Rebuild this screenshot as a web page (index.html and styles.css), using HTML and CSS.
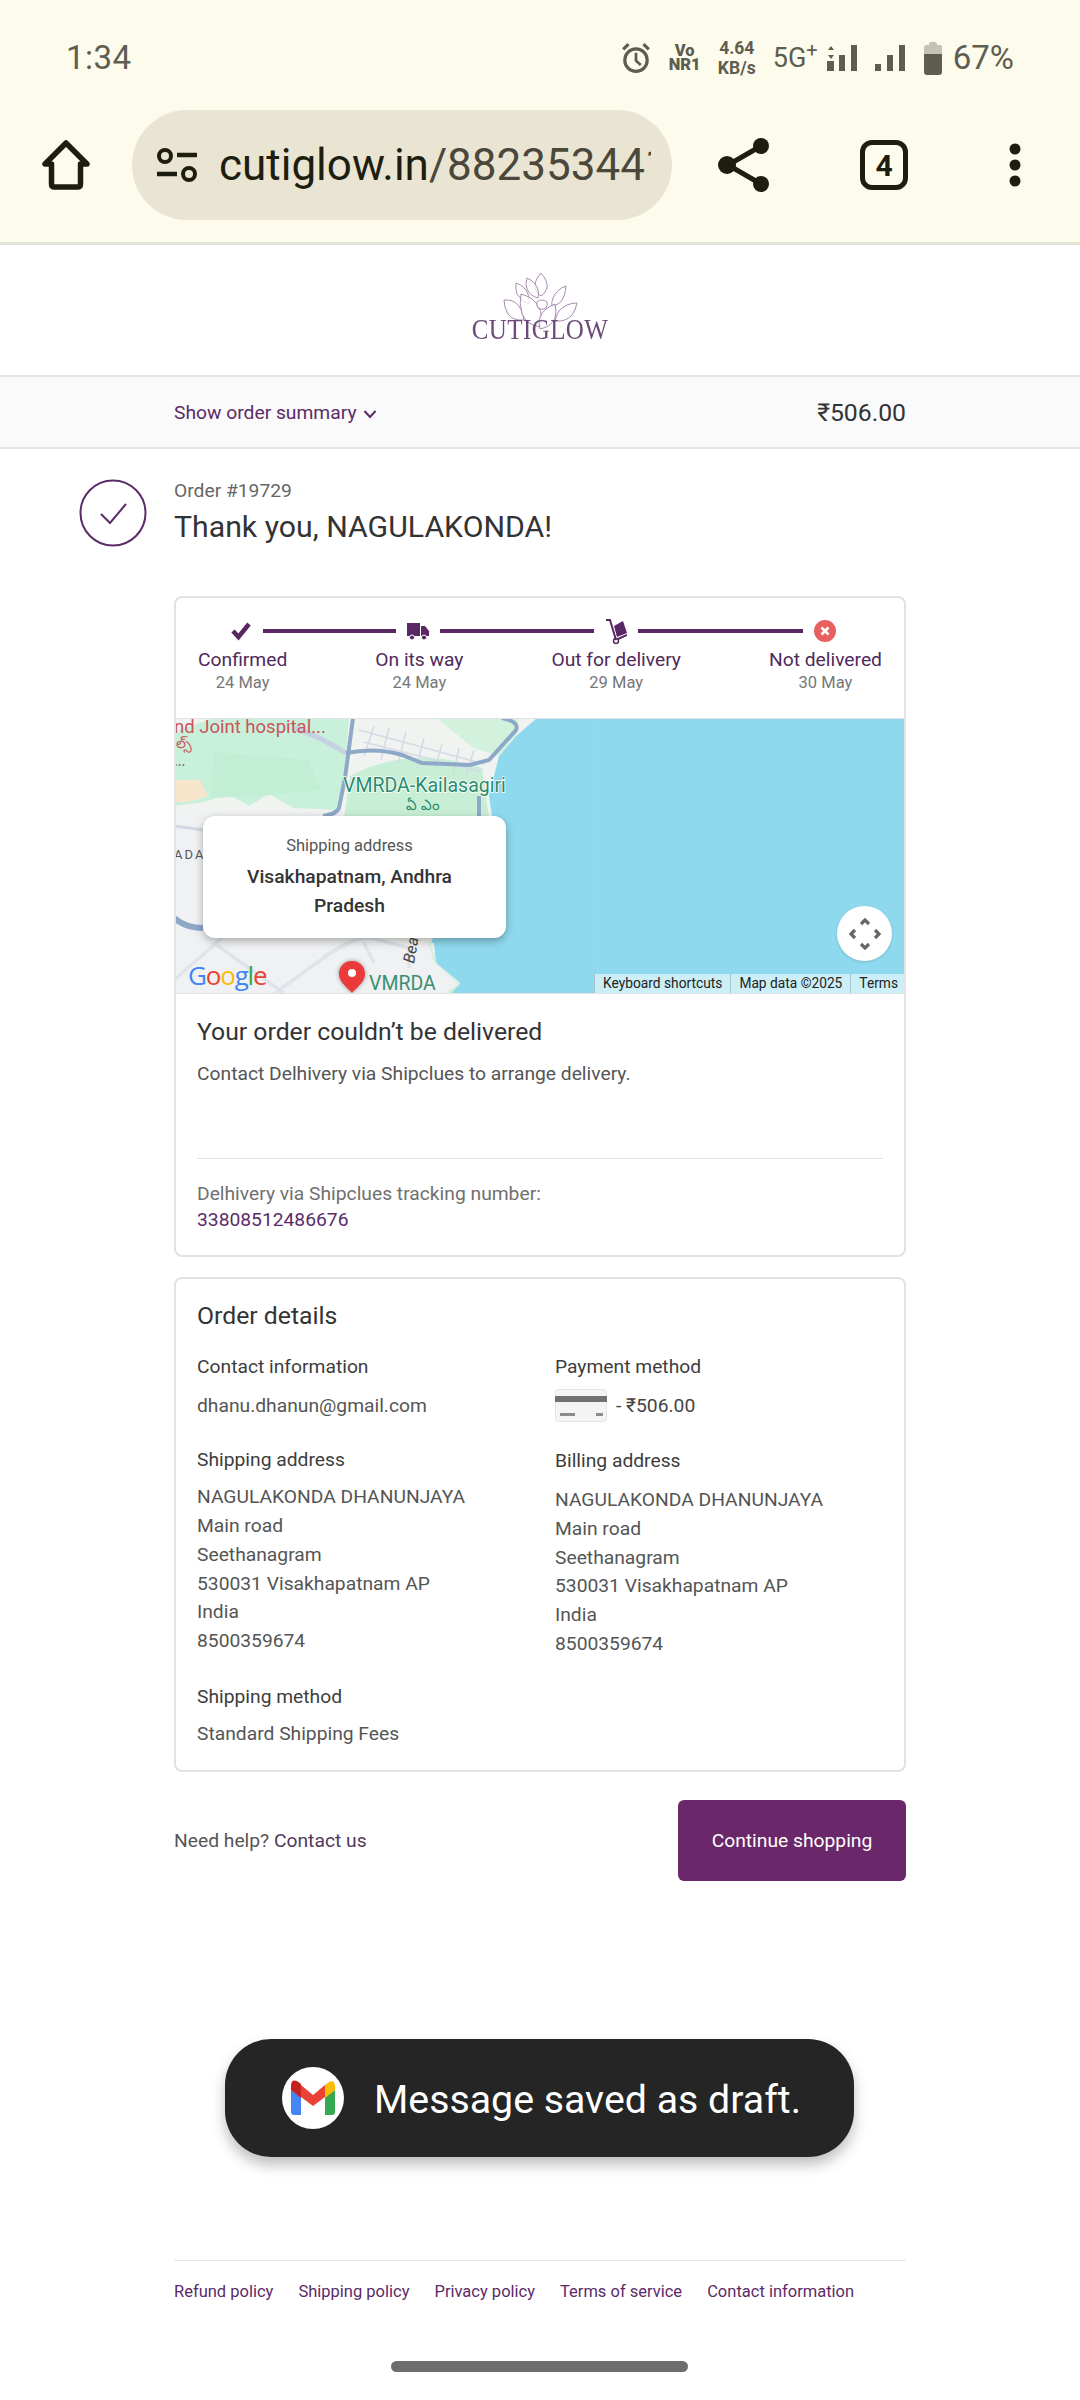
FILE: index.html
```html
<!DOCTYPE html>
<html lang="en">
<head>
<meta charset="utf-8">
<title>Thank you - Cutiglow</title>
<link rel="stylesheet" href="styles.css">
</head>
<body>
<div class="screen">
  <header class="chrome">
    <div class="status">
      <span class="time">1:34</span>
      <div class="status-icons">
        <svg class="alarm" viewBox="0 0 28 30" width="30" height="32"><circle cx="14" cy="17" r="10.500" fill="none" stroke="#5d5d50" stroke-width="3"/><path d="M14 10v7.500l4.500 4" fill="none" stroke="#5d5d50" stroke-width="2.600"/><path d="M2 7l5-5M26 7l-5-5" stroke="#5d5d50" stroke-width="3"/></svg>
        <span class="stack vo"><b>Vo</b><b>NR1</b></span>
        <span class="stack speed"><b>4.64</b><b>KB/s</b></span>
        <span class="net">5G<sup>+</sup></span>
        <svg viewBox="0 0 33 28" width="33" height="28"><path d="M3 6l3-4 3 4zM3 11l3 4 3-4z" fill="#5d5d50"/><rect x="2" y="17" width="7" height="10" fill="#5d5d50"/><rect x="14" y="11" width="6" height="16" fill="#5d5d50"/><rect x="26" y="1" width="6" height="26" fill="#5d5d50"/></svg>
        <svg class="sig2" viewBox="0 0 33 28" width="33" height="28"><rect x="1" y="20" width="6" height="7" fill="#5d5d50"/><rect x="13" y="11" width="6" height="16" fill="#5d5d50"/><rect x="25" y="1" width="6" height="26" fill="#5d5d50"/></svg>
        <svg class="batt" viewBox="0 0 18 34" width="18" height="34"><path d="M5 3q0-2 2-2h4q2 0 2 2v1h3q2 0 2 2v8H0V6q0-2 2-2h3z" fill="#c3c2b4"/><path d="M0 13h18v18q0 3-3 3H3q-3 0-3-3z" fill="#5d5d50"/></svg>
        <span class="pct">67%</span>
      </div>
    </div>
    <div class="toolbar">
      <svg class="home" viewBox="0 0 48 50" width="48" height="50"><path d="M24 3L3 24h6.500v20q0 3 3 3h23q3 0 3-3V24H45z" fill="none" stroke="#1d1d10" stroke-width="5.500" stroke-linejoin="round"/></svg>
      <div class="omnibox">
        <svg class="tune" viewBox="0 0 42 36" width="42" height="36"><circle cx="9" cy="9" r="6" fill="none" stroke="#1d1d10" stroke-width="4"/><path d="M21 8h20M1 27h20" stroke="#1d1d10" stroke-width="4.500"/><circle cx="33" cy="27" r="6" fill="none" stroke="#1d1d10" stroke-width="4"/></svg>
        <div class="url"><span class="host">cutiglow.in</span>/882353441</div>
      </div>
      <svg class="share" viewBox="0 0 52 56" width="52" height="56"><path d="M43 9L10 28l33 19" fill="none" stroke="#1d1d10" stroke-width="5"/><circle cx="43" cy="9" r="8" fill="#1d1d10"/><circle cx="9" cy="28" r="9" fill="#1d1d10"/><circle cx="43" cy="47" r="8" fill="#1d1d10"/></svg>
      <div class="tabs">4</div>
      <svg class="menu" viewBox="0 0 14 44" width="14" height="44"><circle cx="7" cy="6" r="5.500" fill="#1d1d10"/><circle cx="7" cy="22" r="5.500" fill="#1d1d10"/><circle cx="7" cy="38" r="5.500" fill="#1d1d10"/></svg>
    </div>
  </header>

  <div class="brand">
    <div class="logo">
      <svg viewBox="0 0 75 68" width="75" height="68">
        <g fill="rgba(255,255,255,.75)" stroke="#a78bb0" stroke-width="1">
          <path d="M38 1q7 8 6 15-2 6-6 8-4-2-6-8-1-7 6-15z"/>
          <path d="M24 6q9 4 11 12 1 5 0 8-8-2-11-9-2-6 0-11z"/>
          <path d="M13 11q9 3 12 11 2 6 1 10-8-3-12-10-2-6-1-11z"/>
          <path d="M63 14q-9 3-13 12-2 5-1 8 9-1 12-10 2-6 2-10z"/>
          <path d="M1 28q9-1 15 6 4 5 5 14-11 1-16-6-4-7-4-14z"/>
          <path d="M74 31q-11 0-18 8-3 5-4 10 11 1 17-6 4-6 5-12z"/>
          <path d="M18 22q12 3 18 13 4 9 1 20-13-2-18-13-3-11-1-20z"/>
          <path d="M52 32q-11 4-15 13-2 7 0 12 11-2 15-11 2-7 0-14z"/>
          <path d="M34 30q5-4 10 0 1 3-1 6-4 3-8 0-2-3-1-6z"/>
        </g>
      </svg>
      <span class="wordmark">CUTIGLOW</span>
    </div>
  </div>

  <div class="summary">
    <div class="summary-inner">
      <span class="summary-link">Show order summary
        <svg viewBox="0 0 14 10" width="14" height="10"><path d="M1.500 2L7 8l5.500-6" fill="none" stroke="#5b2b68" stroke-width="2"/></svg>
      </span>
      <span class="summary-total">₹506.00</span>
    </div>
  </div>

  <main class="main">
    <section class="order-head">
      <svg class="check-circle" viewBox="0 0 68 68" width="68" height="68"><circle cx="34" cy="34" r="32.500" fill="none" stroke="#5b2b68" stroke-width="2"/><path d="M22 35l9 9 16-19" fill="none" stroke="#5b2b68" stroke-width="2"/></svg>
      <div class="order-text">
        <p class="order-no">Order #19729</p>
        <h1 class="thanks">Thank you, NAGULAKONDA!</h1>
      </div>
    </section>

    <section class="card tracking">
      <div class="progress">
        <div class="icons">
          <svg viewBox="0 0 22 22" width="22" height="22"><path d="M3 11l5.500 6L19 4" fill="none" stroke="#592763" stroke-width="4.500"/></svg>
          <span class="line l1"></span>
          <svg viewBox="0 0 22 22" width="22" height="22"><path d="M0 3h13v13H0z" fill="#592763"/><path d="M14 6h4l4 5v5h-8z" fill="#592763"/><circle cx="5" cy="17.500" r="2.500" fill="#592763" stroke="#fff"/><circle cx="17" cy="17.500" r="2.500" fill="#592763" stroke="#fff"/></svg>
          <span class="line l2"></span>
          <svg viewBox="0 0 22 26" width="22" height="26"><path d="M1 2h4l6 20" fill="none" stroke="#592763" stroke-width="2"/><circle cx="11" cy="23" r="2.500" fill="none" stroke="#592763" stroke-width="1.500"/><path d="M9 8l9-5 4 12-10 4z" fill="#592763"/><path d="M13 21l9-4" stroke="#592763" stroke-width="2"/></svg>
          <span class="line l3"></span>
          <svg viewBox="0 0 22 22" width="22" height="22"><circle cx="11" cy="11" r="11" fill="#e85f5f"/><path d="M7.500 7.500l7 7m0-7l-7 7" stroke="#fff" stroke-width="2.600"/></svg>
        </div>
        <div class="labels">
          <div class="step"><span class="step-name">Confirmed</span><span class="step-date">24 May</span></div>
          <div class="step"><span class="step-name">On its way</span><span class="step-date">24 May</span></div>
          <div class="step"><span class="step-name">Out for delivery</span><span class="step-date">29 May</span></div>
          <div class="step"><span class="step-name">Not delivered</span><span class="step-date">30 May</span></div>
        </div>
      </div>

      <div class="map">
        <svg class="map-art" viewBox="0 0 732 276" width="732" height="276">
          <rect width="732" height="276" fill="#8fd9ee"/>
          <rect x="423" width="1" height="256" fill="#92dbef"/>
          <path d="M0 0H363L342 18 325 38 315 78 318 98 300 130 270 190 257 225 262 245 286 265 276 276H0z" fill="#f0f3f0"/>
          <path d="M0 14L40 0H175L170 60 162 92 120 90 95 76 75 88 55 76 30 84 0 88z" fill="#c8f0da"/>
          <path d="M40 34l95 8 12 30-60 6-50 2z" fill="#c3eed6"/>
          <path d="M262 0H345L342 18 325 38 300 30z" fill="#d2f2dd"/>
          <path d="M176 58q60-32 132-8l7 50H170z" fill="#c8efd6"/>
          <path d="M0 62h26l8 16-20 6H0z" fill="#f6e4cb"/>
          <path d="M0 95h170v130l90 0 2 20 24 20-10 11H0z" fill="#f0f1f3"/>
          <path d="M256 224l7 22 23 20-10 10h-6l14-10-24-22-6-20z" fill="#d5efdf"/>
          <g fill="none" stroke="#d3dae6" stroke-width="1.500">
            <path d="M185 12l125 34M190 24l118 30M200 8l-10 30M215 10l-8 32M232 14l-8 32M250 20l-8 32M268 26l-8 28M285 30l-6 26M300 32l-8 26"/>
          </g>
          <path d="M120 10q25 8 52 25" fill="none" stroke="#c5d2e2" stroke-width="5"/>
          <g fill="none" stroke="#8ea8c8" stroke-width="4">
            <path d="M179 0l-8 60-6 30q-2 6-16 8"/>
            <path d="M172 35q30-6 56 2l20 8 48 2 19-5 27-30q4-8-14-12"/>
            <path d="M305 78v22"/>
            <path d="M0 200q12 10 29 10" stroke-width="6"/>
          </g>
          <path d="M0 108l30 4" fill="none" stroke="#d0d8e4" stroke-width="3"/>
          <g fill="none" stroke="#dfe4ea" stroke-width="3.500">
            <path d="M0 262l50-44M100 276l55-40q30-22 50-14l30 8v20M150 238l40-20M40 225l70 50M190 225l10 20"/>
          </g>
          <text class="t-hospital" x="0" y="15">nd Joint hospital...</text>
          <text class="t-tel-red" x="-8" y="30">ఎల్స్</text>
          <text class="t-dots" x="0" y="48">...</text>
          <text class="t-park" x="169" y="74">VMRDA-Kailasagiri</text>
          <text class="t-tel-green" x="232" y="92">ఏ ఎం</text>
          <text class="t-ada" x="0" y="141">ADA</text>
          <text class="t-bea" transform="translate(240 246) rotate(-80)">Bea</text>
          <text class="t-vmrda" x="195" y="272">VMRDA</text>
          <path class="pin" d="M178 243c-8 0-13 6-13 13 0 8 8 13 13 19 5-6 13-11 13-19 0-7-5-13-13-13z" fill="#ea3a3a"/>
          <circle cx="178" cy="255" r="4" fill="#fff"/>
        </svg>
        <div class="google"><span class="g-b">G</span><span class="g-r">o</span><span class="g-y">o</span><span class="g-b">g</span><span class="g-g">l</span><span class="g-r">e</span></div>
        <div class="tip">
          <p class="tip-label">Shipping address</p>
          <p class="tip-place">Visakhapatnam, Andhra Pradesh</p>
        </div>
        <button class="compass" aria-label="Map camera controls">
          <svg viewBox="0 0 32 32" width="32" height="32"><path d="M12 6l4-4 4 4M12 26l4 4 4-4M6 12l-4 4 4 4M26 12l4 4-4 4" fill="none" stroke="#666" stroke-width="3.200"/></svg>
        </button>
        <div class="attrib"><span>Keyboard shortcuts</span><span>Map data ©2025</span><span>Terms</span></div>
      </div>

      <div class="track-body">
        <h2 class="card-title">Your order couldn’t be delivered</h2>
        <p class="contact-note">Contact Delhivery via Shipclues to arrange delivery.</p>
        <div class="rule"></div>
        <p class="track-label">Delhivery via Shipclues tracking number:</p>
        <p class="track-no">33808512486676</p>
      </div>
    </section>

    <section class="card details">
      <h2 class="card-title">Order details</h2>
      <div class="detail-grid">
        <div class="col">
          <div class="block b-contact">
            <h3>Contact information</h3>
            <p class="first">dhanu.dhanun@gmail.com</p>
          </div>
          <div class="block b-ship">
            <h3>Shipping address</h3>
            <p class="first">NAGULAKONDA DHANUNJAYA<br>Main road<br>Seethanagram<br>530031 Visakhapatnam AP<br>India<br>8500359674</p>
          </div>
          <div class="block b-method">
            <h3>Shipping method</h3>
            <p class="first">Standard Shipping Fees</p>
          </div>
        </div>
        <div class="col">
          <div class="block b-contact">
            <h3>Payment method</h3>
            <div class="pay">
              <svg viewBox="0 0 52 33" width="52" height="33"><rect x=".5" y=".5" width="51" height="32" rx="3" fill="#f4f4f4" stroke="#e4e4e4"/><rect y="7" width="52" height="6" fill="#707070"/><rect x="5" y="24" width="15" height="3" fill="#8c8c8c"/><rect x="41" y="24" width="7" height="3" fill="#8c8c8c"/></svg>
              <span>- ₹506.00</span>
            </div>
          </div>
          <div class="block b-bill">
            <h3>Billing address</h3>
            <p class="first">NAGULAKONDA DHANUNJAYA<br>Main road<br>Seethanagram<br>530031 Visakhapatnam AP<br>India<br>8500359674</p>
          </div>
        </div>
      </div>
    </section>

    <section class="actions">
      <p class="help">Need help? <span class="help-link">Contact us</span></p>
      <button class="continue">Continue shopping</button>
    </section>

    <footer class="foot">
      <span>Refund policy</span><span>Shipping policy</span><span>Privacy policy</span><span>Terms of service</span><span>Contact information</span>
    </footer>
  </main>

  <div class="toast">
    <span class="toast-icon">
      <svg viewBox="0 0 44 36" width="44" height="36">
        <path d="M0 10v22q0 3 3 3h7V17z" fill="#4285f4"/>
        <path d="M34 17v18h7q3 0 3-3V10z" fill="#34a853"/>
        <path d="M0 10l10 8V4L6 1Q0-1 0 6z" fill="#c5221f"/>
        <path d="M10 5l12 10L34 5v12L22 26 10 17z" fill="#ea4335"/>
        <path d="M34 5l4-3q6-3 6 5v3l-10 8z" fill="#fbbc04"/>
      </svg>
    </span>
    <span class="toast-text">Message saved as draft.</span>
  </div>
  <div class="home-bar"></div>
</div>
</body>
</html>
```

FILE: styles.css
```css
* { box-sizing: border-box; }
html, body { margin: 0; padding: 0; }
body { background: #fff; font-family: Roboto, "Noto Sans", sans-serif; color: #333; }
p, h1, h2, h3 { margin: 0; font-weight: 400; }
.screen { position: relative; width: 1080px; height: 2400px; overflow: hidden; background: #fff; }

.chrome { height: 245px; background: #fdfbec; border-bottom: 3px solid #e3e4d6; }
.status { height: 110px; display: flex; justify-content: space-between; align-items: center; padding: 5px 66px 0; color: #5d5d50; }
.time { font-size: 33px; letter-spacing: .5px; }
.status-icons { display: flex; align-items: center; }
.alarm { margin-right: 16px; }
.stack { display: flex; flex-direction: column; align-items: center; font-weight: 700; }
.vo { font-size: 16.500px; line-height: 14px; width: 36px; margin-right: 12px; }
.speed { font-size: 17.500px; line-height: 20px; width: 44px; margin-right: 14px; font-weight: 500; }
.net { font-size: 27px; margin-right: 11px; width: 41px; white-space: nowrap; }
.net sup { font-size: 20px; line-height: 0; }
.sig2 { margin-left: 16px; margin-right: 17.500px; }
.batt { margin-right: 10.500px; }
.pct { font-size: 33px; }

.toolbar { height: 110px; display: flex; align-items: center; padding-left: 42px; }
.omnibox { width: 540px; height: 110px; margin-left: 42px; border-radius: 55px; background: #e9e5d2; display: flex; align-items: center; padding-left: 24px; overflow: hidden; flex: none; }
.tune { flex: none; margin-right: 21px; }
.url { font-size: 44px; color: #4b473a; white-space: nowrap; width: 432px; overflow: hidden; }
.host { color: #1d1d10; }
.share { margin-left: 46px; flex: none; }
.tabs { margin-left: 90px; width: 48px; height: 50px; border: 5px solid #1d1d10; border-radius: 12px; display: flex; align-items: center; justify-content: center; font-size: 30px; font-weight: 700; color: #1d1d10; flex: none; }
.menu { margin-left: 100px; flex: none; }

.brand { height: 130px; display: flex; justify-content: center; align-items: flex-start; padding-top: 27px; }
.logo { display: flex; flex-direction: column; align-items: center; width: 136px; }
.logo svg { flex: none; }
.wordmark { margin-top: -23px; font-family: "Liberation Serif", serif; font-size: 25px; line-height: 26px; color: #6d4a7b; letter-spacing: .4px; white-space: nowrap; transform: scaleY(1.15); }

.summary { height: 74px; background: #fafafa; border-top: 2px solid #e4e4e4; border-bottom: 2px solid #e4e4e4; }
.summary-inner { width: 732px; height: 100%; margin: 0 auto; display: flex; justify-content: space-between; align-items: center; }
.summary-link { font-size: 19.250px; color: #5b2b68; display: flex; align-items: center; gap: 6px; }
.summary-link svg { margin-top: 4px; }
.summary-total { font-size: 24.750px; color: #333; }

.main { width: 732px; margin: 0 auto; }
.order-head { display: flex; align-items: center; margin: 30px 0 0 -95px; height: 68px; gap: 27px; }
.order-text { padding-top: 2px; }
.order-no { font-size: 19.250px; line-height: 22px; color: #666; }
.thanks { font-size: 30.250px; line-height: 44px; color: #333; margin-top: 3px; }

.card { border: 2px solid #e2e2e2; border-radius: 8px; overflow: hidden; background: #fff; }
.tracking { margin-top: 49px; height: 661px; }

.progress { height: 120px; padding: 20px 22px 0; }
.icons { height: 26px; display: flex; align-items: center; padding-left: 32px; }
.icons svg { flex: none; }
.line { height: 4px; background: #592763; margin: 0 11px; flex: none; }
.l1 { width: 133px; }
.l2 { width: 154px; }
.l3 { width: 165px; }
.labels { display: flex; justify-content: space-between; margin-top: 3px; }
.step { display: flex; flex-direction: column; align-items: center; }
.step-name { font-size: 19.250px; line-height: 25px; color: #4f2a5c; }
.step-date { font-size: 16.500px; line-height: 22px; color: #777; }

.map { position: relative; height: 276px; margin: 0 -2px; border-top: 1px solid #e2e2e2; border-bottom: 1px solid #e2e2e2; overflow: hidden; }
.map-art { display: block; margin-top: -1px; }
.t-hospital { font: 18.500px Roboto, sans-serif; fill: #c9545a; }
.t-tel-red { font: 14px "Noto Sans", sans-serif; fill: #c9545a; }
.t-dots { font: 14px "Noto Sans", sans-serif; fill: #8a6a6a; }
.t-tel-green { font: 15px "Noto Sans", sans-serif; fill: #2a8a6c; }
.t-park { font: 19.500px Roboto, sans-serif; fill: #2a8a6c; stroke: #fff; stroke-width: 1.500px; paint-order: stroke; }
.t-ada { font: 13px Roboto, sans-serif; fill: #555; letter-spacing: 2px; }
.t-bea { font: italic 16px Roboto, sans-serif; fill: #444; }
.t-vmrda { font: 19.500px Roboto, sans-serif; fill: #3a8f72; }
.pin { filter: drop-shadow(0 0 2px rgba(0,0,0,.4)); }
.google { position: absolute; left: 14px; top: 238px; font: 500 26px "Open Sans", sans-serif; line-height: 36px; letter-spacing: -1.200px; }
.g-b { color: #4285f4; }
.g-r { color: #ea4335; }
.g-y { color: #fbbc04; }
.g-g { color: #34a853; }
.tip { position: absolute; left: 29px; top: 97px; width: 303px; height: 122px; background: #fff; border-radius: 12px; box-shadow: 0 3px 8px rgba(0,0,0,.3); text-align: center; padding: 19px 42px 0 32px; }
.tip-label { font-size: 16.500px; line-height: 22px; color: #555; }
.tip-place { font-size: 19.250px; line-height: 29px; font-weight: 500; color: #333; margin-top: 5px; }
.compass { position: absolute; right: 14px; top: 187px; width: 55px; height: 55px; border-radius: 50%; background: #fff; border: 0; padding: 0; display: flex; align-items: center; justify-content: center; box-shadow: 0 1px 3px rgba(0,0,0,.15); }
.attrib { position: absolute; right: 0; bottom: 0; display: flex; height: 19px; font-size: 13.750px; line-height: 19px; color: #222; }
.attrib span { background: rgba(255,255,255,.55); padding: 0 8px; border-left: 1px solid rgba(120,160,175,.5); white-space: nowrap; }

.track-body { padding: 21px 21px 0; }
.card-title { font-size: 24.750px; line-height: 34px; color: #333; }
.contact-note { font-size: 19.250px; line-height: 26px; color: #555; margin-top: 12px; }
.rule { height: 1px; background: #e2e2e2; margin-top: 71px; }
.track-label { font-size: 19.250px; line-height: 26px; color: #707070; margin-top: 22px; }
.track-no { font-size: 19.250px; line-height: 26px; color: #5b2b68; }

.details { margin-top: 20px; height: 495px; padding: 20px 21px 0; }
.detail-grid { display: grid; grid-template-columns: 358px 1fr; margin-top: 21px; }
.block h3 { font-size: 19.250px; line-height: 26px; color: #3d3d3d; }
.block p { font-size: 19.250px; line-height: 28.800px; color: #555; }
.block p.first { margin-top: 12px; }
.b-ship p.first, .b-method p.first { margin-top: 10.500px; }
.b-ship { margin-top: 26px; }
.b-bill { margin-top: 26px; }
.b-method { margin-top: 27.500px; }
.pay { display: flex; align-items: center; gap: 9px; margin-top: 9px; font-size: 19.250px; color: #444; }

.actions { display: flex; justify-content: space-between; align-items: center; margin-top: 28px; }
.help { font-size: 19.250px; color: #555; }
.help-link { color: #4f3a5c; }
.continue { width: 228px; height: 81px; background: #6a2769; border: 0; border-radius: 6px; color: #fff; font: 19.250px Roboto, sans-serif; }

.foot { margin-top: 379px; border-top: 1px solid #e6e6e6; padding-top: 19px; display: flex; gap: 25px; font-size: 16.500px; line-height: 24px; color: #5b2b68; white-space: nowrap; }

.toast { position: absolute; left: 225px; top: 2039px; width: 629px; height: 118px; border-radius: 46px; background: #252525; box-shadow: 0 8px 14px rgba(0,0,0,.25); display: flex; align-items: center; padding-left: 57px; gap: 30px; }
.toast-icon { width: 62px; height: 62px; border-radius: 50%; background: #fff; display: flex; align-items: center; justify-content: center; flex: none; }
.toast-text { font-size: 39.300px; color: #fff; white-space: nowrap; padding-top: 4px; }
.home-bar { position: absolute; left: 391px; top: 2361px; width: 297px; height: 11px; border-radius: 6px; background: #6d6d6d; }
```
